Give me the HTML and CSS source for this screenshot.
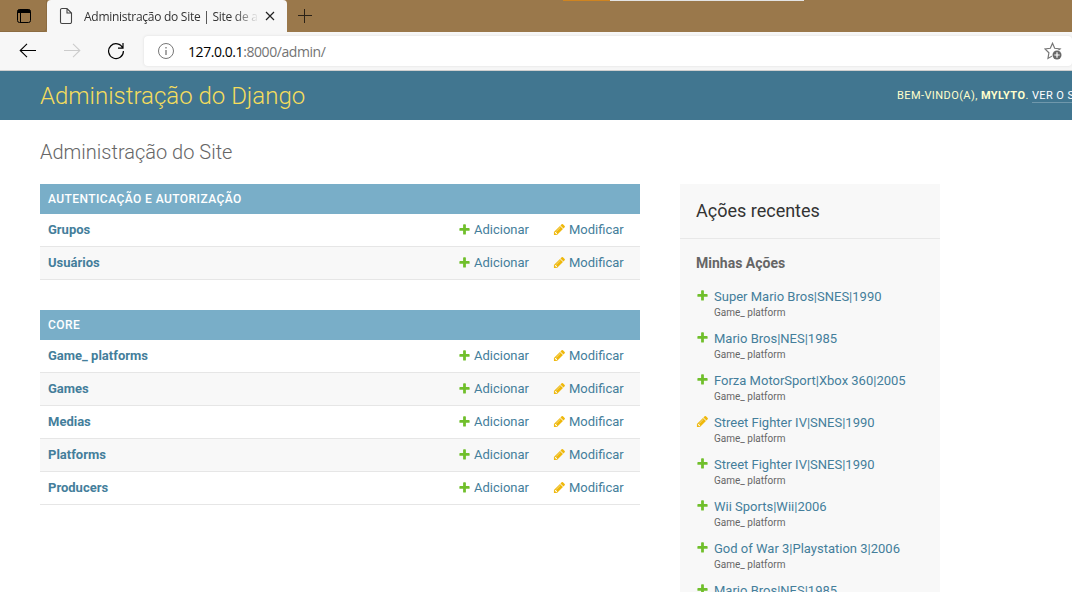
FILE: index.html
```
<!DOCTYPE html>
<html lang="pt-br">
<head>
<meta charset="utf-8">
<title>Administração do Site | Site de administração do Django</title>
<link rel="stylesheet" href="styles.css">
</head>
<body>
<svg class="defs" aria-hidden="true">
  <symbol id="add" viewBox="0 0 1792 1792"><path fill="#70bf2b" d="M1600 796v192q0 40-28 68t-68 28h-416v416q0 40-28 68t-68 28h-192q-40 0-68-28t-28-68v-416h-416q-40 0-68-28t-28-68v-192q0-40 28-68t68-28h416v-416q0-40 28-68t68-28h192q40 0 68 28t28 68v416h416q40 0 68 28t28 68z"/></symbol>
  <symbol id="edit" viewBox="0 0 1792 1792"><path fill="#efb80b" d="M491 1536l91-91-235-235-91 91v107h128v128h107zm523-928q0-22-22-22-10 0-17 7l-542 542q-7 7-7 17 0 22 22 22 10 0 17-7l542-542q7-7 7-17zm-54-192l416 416-832 832h-416v-416zm683 96q0 53-37 90l-166 166-416-416 166-165q36-38 90-38 53 0 91 38l235 234q37 39 37 91z"/></symbol>
</svg>
<div class="browser">
  <div class="tabs">
    <div class="tab-menu"><svg width="16" height="16" viewBox="0 0 16 16"><rect x="1.5" y="1.5" width="13" height="13" rx="2" fill="none" stroke="#000"/><path d="M1.5 5V3.5a2 2 0 0 1 2-2h9a2 2 0 0 1 2 2V5z"/><path d="M4.5 5v9.500" stroke="#000"/></svg></div>
    <div class="tab">
      <svg class="page-icon" width="14" height="18" viewBox="0 0 14 18"><path d="M3 1.500h5l4.500 4.500v9a1.500 1.500 0 0 1-1.500 1.500H3A1.500 1.500 0 0 1 1.500 15V3A1.500 1.500 0 0 1 3 1.500zM8 1.500V6h4.500" fill="none" stroke="#444" stroke-width="1.100"/></svg>
      <span class="tab-title">Administração do Site | Site de administração</span>
      <svg class="close" width="10" height="10" viewBox="0 0 10 10"><path d="M1 1l8 8M9 1L1 9" stroke="#222" stroke-width="1.200"/></svg>
    </div>
    <svg class="new-tab" width="16" height="16" viewBox="0 0 16 16"><path d="M1 7.500h14M7.500 1v14" stroke="#2b2217"/></svg>
    <div class="loading"></div>
  </div>
  <div class="toolbar">
    <svg class="back" width="18" height="16" viewBox="0 0 18 16"><path d="M17 7.500H1.500M8 .8L1.200 7.500 8 14.200" fill="none" stroke="#000" stroke-width="1.100"/></svg>
    <svg class="forward" width="18" height="16" viewBox="0 0 18 16"><path d="M1 7.500h15.500M10 .8l6.800 6.700L10 14.200" fill="none" stroke="#ccc" stroke-width="1.100"/></svg>
    <svg class="reload" width="18" height="18" viewBox="0 0 18 18"><path d="M15.800 6.200A7.400 7.400 0 1 0 16.400 9M11 6.100h5V1" fill="none" stroke="#000" stroke-width="1.200"/></svg>
    <div class="address">
      <svg class="info" width="17" height="17" viewBox="0 0 17 17"><circle cx="8" cy="8" r="7.500" fill="none" stroke="#777"/><path d="M8 7v5M8 4v1.500" stroke="#777" stroke-width="1.300"/></svg>
      <span class="url"><b>127.0.0.1</b>:8000/admin/</span>
      <svg class="star" width="18" height="18" viewBox="0 0 18 18"><path d="M8.500 1.300l2.200 5 5.400.6-4 3.500 1.100 4.800-4.700-1.400-4.500 2.600.9-5.600L1 7l5.300-.7z" fill="#fff" stroke="#767676" stroke-width="1.200"/><circle cx="12.900" cy="12.900" r="5.200" fill="#fff"/><circle cx="13" cy="13" r="4.500" fill="#686868"/><path d="M10.300 13h5.400M13 10.300v5.400" stroke="#fff" stroke-width="1.200"/></svg>
    </div>
  </div>
</div>
<header class="header">
  <h1>Administração do Django</h1>
  <div class="user-tools">Bem-vindo(a), <strong>Mylyto</strong>. <a>Ver o site</a></div>
</header>
<main class="content">
  <h1 class="title">Administração do Site</h1>
  <div class="columns">
    <div class="main">
      <section class="module">
        <h2>Autenticação e Autorização</h2>
        <div class="row"><a class="model">Grupos</a><a class="add"><svg><use href="#add"/></svg>Adicionar</a><a class="edit"><svg><use href="#edit"/></svg>Modificar</a></div>
        <div class="row"><a class="model">Usuários</a><a class="add"><svg><use href="#add"/></svg>Adicionar</a><a class="edit"><svg><use href="#edit"/></svg>Modificar</a></div>
      </section>
      <section class="module">
        <h2>Core</h2>
        <div class="row"><a class="model">Game_ platforms</a><a class="add"><svg><use href="#add"/></svg>Adicionar</a><a class="edit"><svg><use href="#edit"/></svg>Modificar</a></div>
        <div class="row"><a class="model">Games</a><a class="add"><svg><use href="#add"/></svg>Adicionar</a><a class="edit"><svg><use href="#edit"/></svg>Modificar</a></div>
        <div class="row"><a class="model">Medias</a><a class="add"><svg><use href="#add"/></svg>Adicionar</a><a class="edit"><svg><use href="#edit"/></svg>Modificar</a></div>
        <div class="row"><a class="model">Platforms</a><a class="add"><svg><use href="#add"/></svg>Adicionar</a><a class="edit"><svg><use href="#edit"/></svg>Modificar</a></div>
        <div class="row"><a class="model">Producers</a><a class="add"><svg><use href="#add"/></svg>Adicionar</a><a class="edit"><svg><use href="#edit"/></svg>Modificar</a></div>
      </section>
    </div>
    <aside class="recent">
      <h2>Ações recentes</h2>
      <h3>Minhas Ações</h3>
      <ul>
        <li><svg><use href="#add"/></svg><div><a>Super Mario Bros|SNES|1990</a><small>Game_ platform</small></div></li>
        <li><svg><use href="#add"/></svg><div><a>Mario Bros|NES|1985</a><small>Game_ platform</small></div></li>
        <li><svg><use href="#add"/></svg><div><a>Forza MotorSport|Xbox 360|2005</a><small>Game_ platform</small></div></li>
        <li><svg><use href="#edit"/></svg><div><a>Street Fighter IV|SNES|1990</a><small>Game_ platform</small></div></li>
        <li><svg><use href="#add"/></svg><div><a>Street Fighter IV|SNES|1990</a><small>Game_ platform</small></div></li>
        <li><svg><use href="#add"/></svg><div><a>Wii Sports|Wii|2006</a><small>Game_ platform</small></div></li>
        <li><svg><use href="#add"/></svg><div><a>God of War 3|Playstation 3|2006</a><small>Game_ platform</small></div></li>
        <li><svg><use href="#add"/></svg><div><a>Mario Bros|NES|1985</a></div></li>
      </ul>
    </aside>
  </div>
</main>
</body>
</html>
```
FILE: styles.css
```
* { box-sizing: border-box; }
body { margin: 0; height: 592px; overflow: hidden; background: #fff; color: #333; font-family: Roboto, sans-serif; font-size: 13px; }
h1, h2, h3, ul { margin: 0; padding: 0; }
svg { display: block; flex: none; }
.defs { position: absolute; width: 0; height: 0; }

.browser { font-family: "Open Sans", sans-serif; }
.tabs { position: relative; display: flex; align-items: center; height: 32px; background: #9a784b; }
.tab-menu { display: flex; align-items: center; width: 47px; height: 32px; padding-left: 16px; border-bottom: 1px solid #8c6c42; border-right: 1px solid #8c6c42; border-bottom-right-radius: 4px; }
.tab { display: flex; align-items: center; width: 240px; height: 32px; padding-left: 12px; background: #f7f7f7; border-radius: 4px 4px 0 0; }
.tab-title { width: 173px; margin-left: 11px; overflow: hidden; white-space: nowrap; font-size: 12px; letter-spacing: -0.27px; color: #333; -webkit-mask-image: linear-gradient(90deg, #000 150px, transparent 175px); mask-image: linear-gradient(90deg, #000 150px, transparent 175px); }
.close { margin-left: 8px; }
.new-tab { margin-left: 10px; }
.loading { position: absolute; top: 0; left: 563px; width: 241px; height: 1px; background: linear-gradient(90deg, #cf8420 47px, #e3e3e3 47px); }
.toolbar { display: flex; align-items: center; height: 39px; padding-left: 19px; background: #f7f7f7; border-bottom: 1px solid #cfcfcf; }
.forward { margin-left: 26px; }
.reload { margin-left: 26px; }
.address { display: flex; align-items: center; flex: 1; height: 30px; margin-left: 19px; padding: 0 10px 0 14px; background: #fff; border-radius: 4px; box-shadow: 0 0 3px #ddd; }
.url { flex: 1; margin-left: 13px; font-size: 14px; letter-spacing: -0.43px; color: #737373; }
.url b { font-weight: 400; color: #000; }

.header { display: flex; align-items: center; justify-content: space-between; height: 49px; padding-left: 40px; background: #417690; color: #ffc; overflow: hidden; }
.header h1 { font-size: 24px; font-weight: 300; color: #f5dd5d; }
.user-tools { flex: none; width: 175px; font-size: 11px; letter-spacing: .42px; text-transform: uppercase; white-space: nowrap; }
.user-tools a { color: #fff; border-bottom: 1px solid rgba(255,255,255,.25); }

.content { padding: 20px 40px 0; }
.title { height: 44px; font-size: 20px; line-height: 24px; font-weight: 300; color: #666; }
.columns { display: flex; gap: 40px; align-items: flex-start; }
.main { width: 600px; }
.module { margin-bottom: 30px; }
.module h2 { height: 30px; padding: 0 8px; background: #79aec8; color: #fff; font-size: 12px; line-height: 30px; font-weight: 500; letter-spacing: .43px; text-transform: uppercase; }
.row { display: grid; grid-template-columns: 1fr 95px 79px; height: 33px; padding: 0 8px; line-height: 32px; border-bottom: 1px solid #e6e6e6; }
.row:nth-child(odd) { background: #f8f8f8; }
.row a { display: flex; align-items: center; gap: 3px; color: #447e9b; }
.row .model { font-weight: 700; }
.row svg { width: 13px; height: 13px; margin-bottom: 1px; }
.recent { width: 260px; height: 408px; overflow: hidden; background: #f8f8f8; }
.recent h2 { height: 55px; padding: 0 16px; font-size: 18px; line-height: 54px; font-weight: 400; border-bottom: 1px solid #e8e8e8; }
.recent h3 { padding: 15px 16px 0; font-size: 14px; line-height: 18px; color: #666; }
.recent ul { padding: 16px 16px 0; list-style: none; }
.recent li { display: flex; gap: 5px; height: 42px; }
.recent li svg { width: 13px; height: 13px; margin-top: 1px; }
.recent li a { display: block; line-height: 17px; color: #447e9b; }
.recent small { display: block; font-size: 10px; line-height: 15px; color: #666; }
```
